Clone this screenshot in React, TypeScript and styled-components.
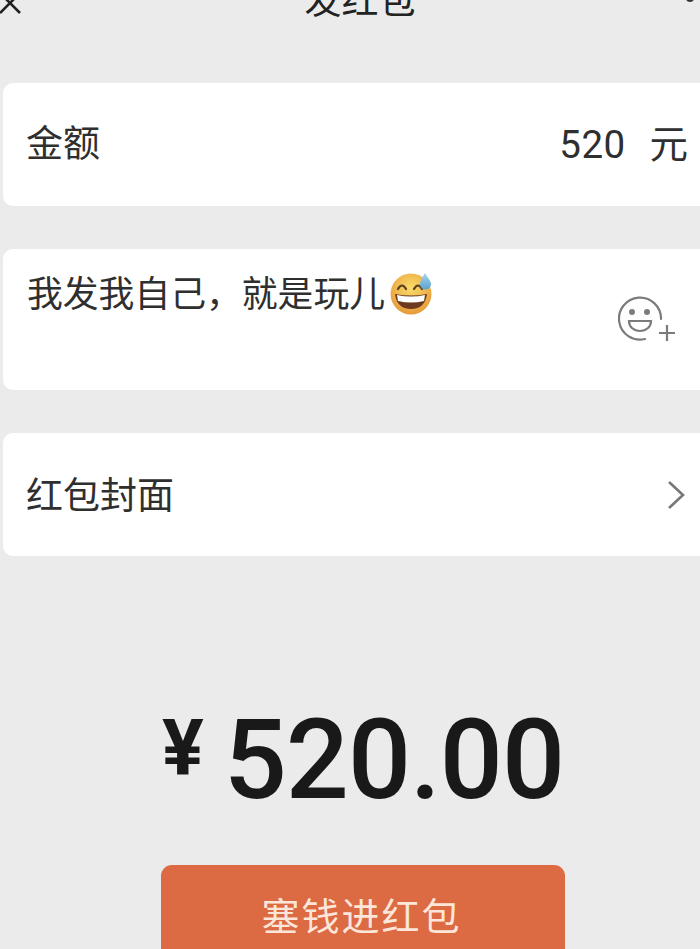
import React from "react";
import styled, { createGlobalStyle } from "styled-components";

const GlobalStyle = createGlobalStyle`
  html, body {
    margin: 0;
    height: 100%;
    overflow: hidden;
    background: #ebebeb;
  }
`;

const CJK = `Roboto, "Noto Sans CJK SC", sans-serif`;

const Page = styled.div`
  display: flex;
  flex-direction: column;
  align-items: center;
  width: 700px;
  height: 949px;
  overflow: hidden;
  background: #ebebeb;
  color: #2f2f2f;
  font-family: ${CJK};
`;

// the title bar is scrolled mostly off the top of the picture
const Header = styled.header`
  display: flex;
  justify-content: space-between;
  align-items: flex-start;
  align-self: stretch;
  flex: none;
  height: 109px;
  margin-top: -26px;
`;

const HeaderSide = styled.div<{ $wide?: boolean }>`
  display: flex;
  justify-content: flex-end;
  width: ${(props) => (props.$wide ? "80px" : "60px")};
`;

const CloseSlot = styled(HeaderSide)`
  justify-content: flex-start;
`;

const Title = styled.h1`
  margin: 4px 0 0;
  font-size: 37px;
  line-height: 48px;
  font-weight: 400;
  color: #222;
`;

const Cards = styled.section`
  display: flex;
  flex-direction: column;
  gap: 43px;
  align-self: stretch;
  flex: none;
  padding-left: 3px;
`;

const Card = styled.div<{ $tall?: boolean }>`
  display: flex;
  justify-content: space-between;
  align-items: ${(props) => (props.$tall ? "flex-start" : "center")};
  height: ${(props) => (props.$tall ? "141px" : "123px")};
  padding: ${(props) => (props.$tall ? "22px 12px 0 24px" : "0 12px 0 23px")};
  box-sizing: border-box;
  background: #fff;
  border-radius: 10px 0 0 10px;
`;

const Label = styled.span<{ $drop?: boolean }>`
  padding-top: ${(props) => (props.$drop ? "5px" : "0")};
  font-size: 37px;
  line-height: 48px;
  font-weight: 400;
`;

const Value = styled.span`
  display: flex;
  gap: 24px;
  font-size: 38.5px;
  line-height: 48px;
`;

const Digits = styled.span`
  letter-spacing: 0.4px;
`;

const Message = styled.span`
  display: flex;
  align-items: center;
  font-size: 35.8px;
  line-height: 48px;
`;

const EmojiIcon = styled.svg`
  width: 44px;
  height: 44px;
  margin-left: 4px;
  margin-top: -4px;
`;

const AddEmoji = styled.svg`
  width: 60px;
  height: 48px;
  margin-top: 24px;
  margin-right: 10px;
`;

const Chevron = styled.svg`
  width: 22px;
  height: 32px;
  margin-right: 1px;
`;

const Total = styled.div`
  display: flex;
  align-items: flex-start;
  flex: none;
  margin-top: 148px;
  margin-left: 26px;
  height: 112px;
  line-height: 112px;
  font-weight: 500;
  color: #191919;
`;

const Currency = styled.span`
  font-size: 78px;
  line-height: 90px;
  font-weight: 700;
  margin-right: 20px;
`;

const Amount = styled.span`
  font-size: 111px;
  letter-spacing: -1px;
`;

const SubmitButton = styled.button`
  flex: none;
  width: 404px;
  height: 110px;
  margin-top: 49px;
  margin-left: 26px;
  padding: 0 3px 14px 0;
  border: none;
  border-radius: 11px;
  background: #dc6a43;
  color: #fce6da;
  font-family: ${CJK};
  font-size: 38px;
  letter-spacing: 2px;
`;

export default function App() {
  return (
    <Page>
      <GlobalStyle />
      <Header>
        <CloseSlot $wide>
          <svg width="24" height="40" viewBox="0 0 24 40" fill="none" stroke="#222" strokeWidth="2.6">
            <path d="M1 20 L20 39 M0 39 L19 20" />
          </svg>
        </CloseSlot>
        <Title>发红包</Title>
        <HeaderSide>
          <svg width="14" height="29" viewBox="0 0 14 29">
            <circle cx="4" cy="24" r="4" fill="#333" />
          </svg>
        </HeaderSide>
      </Header>
      <Cards>
        <Card>
          <Label>金额</Label>
          <Value>
            <Digits>520</Digits>
            <span>元</span>
          </Value>
        </Card>
        <Card $tall>
          <Message>
            我发我自己，就是玩儿
            <EmojiIcon viewBox="0 0 44 44">
              <defs>
                <radialGradient id="face" cx="50%" cy="35%" r="65%">
                  <stop offset="0%" stopColor="#fbdc6a" />
                  <stop offset="100%" stopColor="#e69a3a" />
                </radialGradient>
                <linearGradient id="drop" x1="0" y1="0" x2="0" y2="1">
                  <stop offset="0%" stopColor="#a8d4ea" />
                  <stop offset="100%" stopColor="#5ba4d4" />
                </linearGradient>
              </defs>
              <circle cx="22" cy="23" r="20.5" fill="url(#face)" />
              <path d="M9 18 Q13 11 17 18 M25 18 Q29 11 33 18" fill="none" stroke="#5a4020" strokeWidth="2.2" strokeLinecap="round" />
              <path d="M6 23 Q22 26 38 23 Q36 38 22 38 Q8 38 6 23Z" fill="#6b3a1e" />
              <path d="M8 24 Q22 27 36 24 L35 30 Q22 33 9 30Z" fill="#fff" />
              <path d="M36 2 C39 7 42 10 42 13 A5.5 5.5 0 0 1 31 13 C31 10 33 7 36 2Z" fill="url(#drop)" />
            </EmojiIcon>
          </Message>
          <AddEmoji viewBox="0 0 60 48" fill="none" stroke="#7b7b7b" strokeWidth="2.2">
            <path d="M43 24 A21 21 0 1 0 27 44" strokeLinecap="round" />
            <circle cx="14" cy="17" r="3" fill="#7b7b7b" stroke="none" />
            <circle cx="29" cy="17" r="3" fill="#7b7b7b" stroke="none" />
            <path d="M11 26 H33 C33 32 28 36 22 36 C16 36 11 32 11 26Z" />
            <path d="M41 38 H57 M49 30 V46" />
          </AddEmoji>
        </Card>
        <Card>
          <Label $drop>红包封面</Label>
          <Chevron viewBox="0 0 22 32" fill="none" stroke="#777" strokeWidth="2.6">
            <path d="M4 3 L18 16 L4 29" />
          </Chevron>
        </Card>
      </Cards>
      <Total>
        <Currency>¥</Currency>
        <Amount>520.00</Amount>
      </Total>
      <SubmitButton>塞钱进红包</SubmitButton>
    </Page>
  );
}
